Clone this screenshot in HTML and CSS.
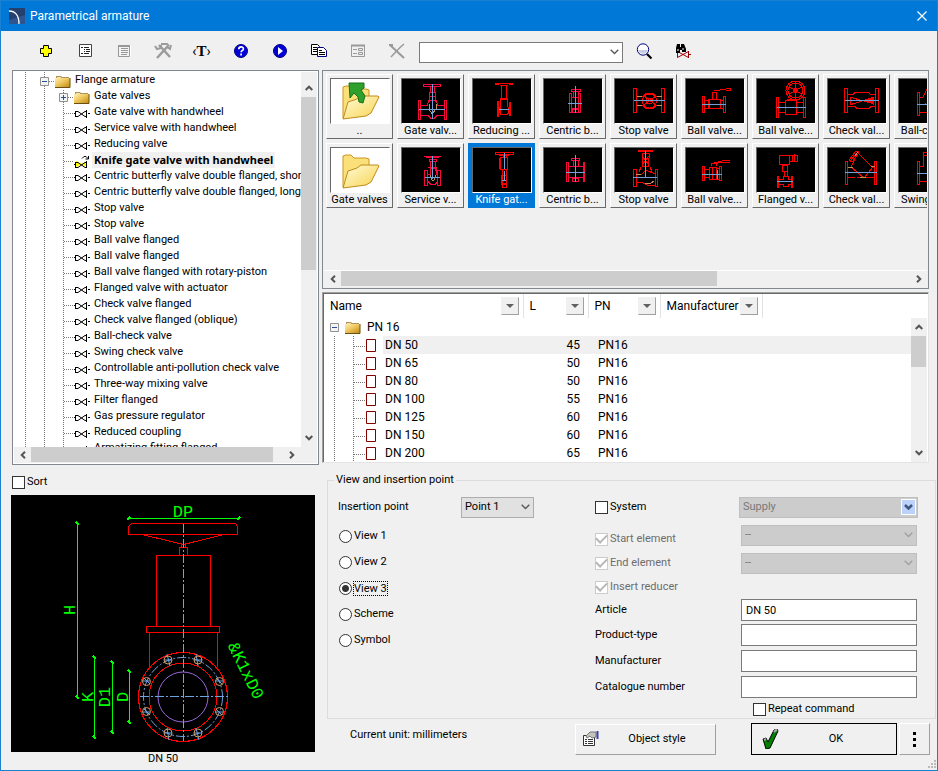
FILE: index.html
```
<!DOCTYPE html>
<html lang="en">
<head>
    <meta charset="UTF-8">
    <meta name="viewport" content="width=device-width, initial-scale=1.0">
    <title>Parametrical armature</title>
    <link rel="stylesheet" href="styles.css">
</head>
<body>
    <!-- Shared icons -->
    <svg class="icon-defs" aria-hidden="true">
        <defs>
            <linearGradient id="gold" x1="0" y1="0" x2="1" y2="1">
                <stop offset="0" stop-color="#fdf0b8"/>
                <stop offset="0.45" stop-color="#f0c860"/>
                <stop offset="1" stop-color="#c08a10"/>
            </linearGradient>
            <linearGradient id="paper" x1="0" y1="0" x2="1" y2="1">
                <stop offset="0" stop-color="#fffbd8"/>
                <stop offset="1" stop-color="#f8d450"/>
            </linearGradient>
            <symbol id="folder" viewBox="0 0 16 13">
                <path d="M1 3V1h5l1 1h7v2H1z" fill="#b0935a"/>
                <path d="M2 2h4v1H2z" fill="#f6e2a0"/>
                <path d="M0 3h15v9H0z" fill="url(#gold)"/>
                <path d="M15 3v9.500H0" fill="none" stroke="#6a5010"/>
            </symbol>
            <symbol id="valve" viewBox="0 0 16 9">
                <path d="M0 4.500h1M1.500 2v6M2 2.500h2M2 7.500h2M4 2.500l7 5M4 7.500l7-5M11 2.500h2M11 7.500h2M12.500 1v8M14 4.500h2" fill="none" stroke="#000"/>
            </symbol>
            <symbol id="valve-active" viewBox="0 0 16 13">
                <path d="M2 6l6 3-6 3zM13 6L7 9l6 3z" fill="#ff0"/>
                <path d="M0 9.500h1M1.500 7v6M2 7.500h2M2 12.500h2M4 7.500l7 5M4 12.500l7-5M11 7.500h2M11 12.500h2M12.500 6v7M8 3.500l2-2h2l2 2M14.500 1v3h-3" fill="none" stroke="#000"/>
            </symbol>
            <symbol id="doc" viewBox="0 0 10 13">
                <path d="M.5.5h9v12h-9z" fill="#fff" stroke="#800000"/>
            </symbol>
            <symbol id="up" viewBox="0 0 8 6"><path d="M0.700 5L4 1.700 7.300 5" fill="none" stroke="#555" stroke-width="2"/></symbol>
            <symbol id="down" viewBox="0 0 8 6"><path d="M0.700 1L4 4.300 7.300 1" fill="none" stroke="#555" stroke-width="2"/></symbol>
            <symbol id="left" viewBox="0 0 6 8"><path d="M5 .7L1.700 4 5 7.300" fill="none" stroke="#555" stroke-width="2"/></symbol>
            <symbol id="right" viewBox="0 0 6 8"><path d="M1 .7L4.300 4 1 7.300" fill="none" stroke="#555" stroke-width="2"/></symbol>
            <symbol id="chevron" viewBox="0 0 9 6"><path d="M.7.7l3.800 3.800L8.300.7" fill="none" stroke="currentColor" stroke-width="1.300"/></symbol>
            <symbol id="filter" viewBox="0 0 8 4"><path d="M0 0h8L4 4z" fill="#606060"/></symbol>
            <symbol id="minus" viewBox="0 0 9 9">
                <path d="M.5.5h8v8h-8z" fill="#f4f4f4" stroke="#919191"/><path d="M2 4.500h5" stroke="#2b4fa0"/>
            </symbol>
            <symbol id="plus" viewBox="0 0 9 9">
                <path d="M.5.5h8v8h-8z" fill="#f4f4f4" stroke="#919191"/><path d="M2 4.500h5M4.500 2v5" stroke="#2b4fa0"/>
            </symbol>
            <symbol id="open-folder" viewBox="0 0 58 44">
                <path d="M12 39V8l3-1h5l3 3h12l3 1v9L16 39z" fill="#fbe07a" stroke="#cf9420"/>
                <path d="M12 40l5-17 9-3 4-3h17l1 1-8 16-5 3z" fill="url(#paper)" stroke="#c08a18"/>
            </symbol>
        </defs>
    </svg>

    <header class="titlebar">
        <svg class="logo" width="16" height="16" viewBox="0 0 16 16">
            <path d="M0 0h16v16H0z" fill="#2f5590"/><path d="M0 0h16v7L0 12z" fill="#23406f"/>
            <path d="M0 3c6 0 10 4 10 13" fill="none" stroke="#fff" stroke-width="1.300"/>
        </svg>
        <h1>Parametrical armature</h1>
        <button class="close" aria-label="Close">
            <svg width="10" height="10" viewBox="0 0 10 10"><path d="M.5.5l9 9M9.500.5l-9 9" stroke="#fff" stroke-width="1.200"/></svg>
        </button>
    </header>

    <nav class="toolbar">
        <button aria-label="Add">
            <svg width="16" height="16" viewBox="0 0 16 16"><path d="M5.500 2.500h5v3h3v5h-3v3h-5v-3h-3v-5h3z" fill="#ff0" stroke="#000"/></svg>
        </button>
        <button aria-label="Properties">
            <svg width="16" height="16" viewBox="0 0 16 16"><path d="M2.500 1.500h12v12h-12z" fill="#fff" stroke="#444"/><path d="M4 4.500h2M7 4.500h5M7 6.500h1M9 6.500h4M7 8.500h1M9 8.500h4M4 10.500h2M7 10.500h5" stroke="#222"/></svg>
        </button>
        <button aria-label="List" disabled>
            <svg width="16" height="16" viewBox="0 0 16 16"><path d="M3.500 13.500h11v-11" fill="none" stroke="#fff"/><path d="M2.500 2.500h11v11h-11z" fill="#f3f3f3" stroke="#999"/><path d="M2 3h12" stroke="#999" stroke-width="2"/><path d="M5 5.500h7M5 7.500h7M5 9.500h7M5 11.500h6" stroke="#999"/></svg>
        </button>
        <button aria-label="Tools" disabled>
            <svg width="18" height="18" viewBox="0 0 18 18"><path d="M3 16L14 4M5 3l11 12" fill="none" stroke="#9b9b9b" stroke-width="2.500"/><path d="M7 2h6l2 2M1 4l2 3 4-1 0-3M13 5l3 2 1-4" fill="none" stroke="#9b9b9b" stroke-width="2"/></svg>
        </button>
        <button class="text-tool" aria-label="Text"><span>‹</span><b>T</b><span>›</span></button>
        <button aria-label="Help">
            <svg width="16" height="16" viewBox="0 0 16 16"><circle cx="8" cy="8" r="6.500" fill="#0000d8" stroke="#000080"/><path d="M5.800 6.200c0-3 4.600-3 4.600-.3 0 1.600-2.300 1.500-2.300 3.300M8.100 10.500v2" fill="none" stroke="#fff" stroke-width="1.700"/></svg>
        </button>
        <button aria-label="Run">
            <svg width="16" height="16" viewBox="0 0 16 16"><circle cx="8" cy="8" r="6.500" fill="#0000d8" stroke="#000080"/><path d="M6 4l5 4-5 4z" fill="#fff"/></svg>
        </button>
        <button aria-label="Copy">
            <svg width="16" height="16" viewBox="0 0 16 16"><path d="M.5 1.500h6l2 2v8h-8z" fill="#fff" stroke="#000"/><path d="M2 4.500h4M2 6.500h4M2 8.500h4" stroke="#000"/><path d="M6.500 4.500h6l3 3v6h-9z" fill="#fff" stroke="#000080"/><path d="M8 7.500h3M8 9.500h6M8 11.500h6" stroke="#000"/></svg>
        </button>
        <button aria-label="Form" disabled>
            <svg width="16" height="16" viewBox="0 0 16 16"><path d="M1.500 2.500h13v11h-13z" fill="none" stroke="#999"/><path d="M1 2.500h14" stroke="#999" stroke-width="2"/><path d="M3 6.500h4M3 10.500h4M8.500 5.500h4v2h-4zM8.500 9.500h4v2h-4z" fill="none" stroke="#999"/></svg>
        </button>
        <button aria-label="Delete" disabled>
            <svg width="16" height="16" viewBox="0 0 16 16"><path d="M1 2l14 13" stroke="#999" stroke-width="2"/><path d="M15 1C10 5 7 9 2 14" fill="none" stroke="#999" stroke-width="1.500"/><path d="M0 2h4" stroke="#999" stroke-width="2"/></svg>
        </button>
        <div class="combo search">
            <select aria-label="Search text"><option></option></select>
            <svg width="9" height="6"><use href="#chevron"/></svg>
        </div>
        <button aria-label="Search">
            <svg width="16" height="16" viewBox="0 0 16 16"><circle cx="7" cy="6.500" r="5.700" fill="#fff" stroke="#000080"/><path d="M2 7h10c-1 5-9 5-10 0z" fill="#c8cee4"/><path d="M11 11l4.500 4.500" stroke="#000" stroke-width="2.200"/></svg>
        </button>
        <button aria-label="Find armature">
            <svg width="16" height="16" viewBox="0 0 16 16"><path d="M2.500 8v6.500l11-6v6l-11-6M13.500 8v7M14 11.500h2" fill="none" stroke="#900"/><path d="M2 1h3v3h1V1h3l2 5v3H7V7H5v3H1V5z" fill="#000"/><path d="M3 6v2M8 5v2" stroke="#fff"/></svg>
        </button>
    </nav>

    <main class="content">
        <section class="left">
            <div class="tree-panel">
                <ul class="tree">
                    <li class="root"><svg class="toggle" width="9" height="9"><use href="#minus"/></svg><svg width="16" height="13"><use href="#folder"/></svg><span>Flange armature</span></li>
                    <li class="branch"><svg class="toggle" width="9" height="9"><use href="#plus"/></svg><svg width="16" height="13"><use href="#folder"/></svg><span>Gate valves</span></li>
                    <li><svg width="16" height="9"><use href="#valve"/></svg><span>Gate valve with handwheel</span></li>
                    <li><svg width="16" height="9"><use href="#valve"/></svg><span>Service valve with handwheel</span></li>
                    <li><svg width="16" height="9"><use href="#valve"/></svg><span>Reducing valve</span></li>
                    <li class="active"><svg width="16" height="13"><use href="#valve-active"/></svg><span>Knife gate valve with handwheel</span></li>
                    <li><svg width="16" height="9"><use href="#valve"/></svg><span>Centric butterfly valve double flanged, short</span></li>
                    <li><svg width="16" height="9"><use href="#valve"/></svg><span>Centric butterfly valve double flanged, long</span></li>
                    <li><svg width="16" height="9"><use href="#valve"/></svg><span>Stop valve</span></li>
                    <li><svg width="16" height="9"><use href="#valve"/></svg><span>Stop valve</span></li>
                    <li><svg width="16" height="9"><use href="#valve"/></svg><span>Ball valve flanged</span></li>
                    <li><svg width="16" height="9"><use href="#valve"/></svg><span>Ball valve flanged</span></li>
                    <li><svg width="16" height="9"><use href="#valve"/></svg><span>Ball valve flanged with rotary-piston</span></li>
                    <li><svg width="16" height="9"><use href="#valve"/></svg><span>Flanged valve with actuator</span></li>
                    <li><svg width="16" height="9"><use href="#valve"/></svg><span>Check valve flanged</span></li>
                    <li><svg width="16" height="9"><use href="#valve"/></svg><span>Check valve flanged (oblique)</span></li>
                    <li><svg width="16" height="9"><use href="#valve"/></svg><span>Ball-check valve</span></li>
                    <li><svg width="16" height="9"><use href="#valve"/></svg><span>Swing check valve</span></li>
                    <li><svg width="16" height="9"><use href="#valve"/></svg><span>Controllable anti-pollution check valve</span></li>
                    <li><svg width="16" height="9"><use href="#valve"/></svg><span>Three-way mixing valve</span></li>
                    <li><svg width="16" height="9"><use href="#valve"/></svg><span>Filter flanged</span></li>
                    <li><svg width="16" height="9"><use href="#valve"/></svg><span>Gas pressure regulator</span></li>
                    <li><svg width="16" height="9"><use href="#valve"/></svg><span>Reduced coupling</span></li>
                    <li><svg width="16" height="9"><use href="#valve"/></svg><span>Armatizing fitting flanged</span></li>
                </ul>
                <div class="vbar">
                    <button aria-label="Scroll up"><svg width="8" height="6"><use href="#up"/></svg></button>
                    <div class="track"><div class="thumb tree-thumb"></div></div>
                    <button aria-label="Scroll down"><svg width="8" height="6"><use href="#down"/></svg></button>
                </div>
                <div class="hbar">
                    <button aria-label="Scroll left"><svg width="6" height="8"><use href="#left"/></svg></button>
                    <div class="track"><div class="thumb tree-hthumb"></div></div>
                    <button aria-label="Scroll right"><svg width="6" height="8"><use href="#right"/></svg></button>
                </div>
            </div>

            <label class="check sort"><input type="checkbox">Sort</label>

            <figure class="preview">
                <svg viewBox="0 0 304 257">
                    <path d="M0 0h304v257H0z" fill="#000"/>
                    <g fill="none" stroke="#f00" shape-rendering="crispEdges">
                        <path d="M117.500 39.500V31.500l3-3H224.500l2 3V39.500zM145.500 60.500H199.500V131.500H145.500zM135.500 131.500H208.500V137.500H135.500zM138.500 138V172M206.500 138V172M168.500 52.500H176.500V60.500H168.500zM170.500 49V52M174.500 49V52"/>
                        <path d="M131 39.500L172.500 49.500 213 39.500"/>
                        <circle cx="172" cy="202" r="44.500"/>
                        <circle cx="172" cy="202" r="34"/>
                    </g>
                    <circle cx="172" cy="202" r="25" fill="none" stroke="#9a66d8"/>
                    <g fill="none" stroke="#6ea4e0">
                        <path d="M172.500 29V246M129 201.500H217" stroke-dasharray="9 2 2 2"/>
                        <circle cx="172" cy="202" r="39.500" stroke-dasharray="9 2 2 2"/>
                        <path d="M156 159l3 12M153 165h8M185 159l2 12M183 165h8M133 183l6 6M131 186h8M205 183l6 6M204 186h8M133 214l6 6M131 217h8M205 214l6 6M204 217h8M156 233l2 12M153 238h8M185 233l3 12M183 238h8"/>
                    </g>
                    <g fill="none" stroke="#d19a66">
                        <circle cx="157" cy="165" r="4"/><circle cx="187" cy="165" r="4"/>
                        <circle cx="135.500" cy="186.500" r="4"/><circle cx="208.500" cy="186.500" r="4"/>
                        <circle cx="135.500" cy="216.500" r="4"/><circle cx="208.500" cy="216.500" r="4"/>
                        <circle cx="157" cy="238" r="4"/><circle cx="187" cy="238" r="4"/>
                    </g>
                    <g stroke="#0f0" fill="none" shape-rendering="crispEdges">
                        <path d="M117 23.500H227M66.500 28V202M83.500 162V242M101.500 167V237M118.500 176V227"/>
                        <path d="M116 25l3-3M226 25l3-3M65 27l3 3M65 201l3 3M82 161l3 3M82 241l3 3M100 166l3 3M100 236l3 3M117 175l3 3M117 226l3 3" stroke-width="2"/>
                    </g>
                    <g class="cad-text">
                        <text x="172" y="22">DP</text>
                        <text transform="translate(64 115) rotate(-90)">H</text>
                        <text transform="translate(82 202) rotate(-90)">K</text>
                        <text transform="translate(99 202) rotate(-90)">D1</text>
                        <text transform="translate(117 202) rotate(-90)">D</text>
                        <text transform="translate(230 178) rotate(64)">&amp;K1xD0</text>
                    </g>
                </svg>
                <figcaption>DN 50</figcaption>
            </figure>
        </section>

        <section class="right">
            <div class="gallery">
                <div class="thumbs">
                    <button class="tile"><svg class="light" viewBox="0 0 58 44"><use href="#open-folder"/><path d="M18 4h15v5l-3 2 4 6-2 7-4-1-1-5-4-4-4 5z" fill="#2fa02c" stroke="#15701a"/></svg>..</button>
                    <button class="tile"><svg class="light" viewBox="0 0 58 44"><use href="#open-folder"/></svg>Gate valves</button>
                    <button class="tile"><svg viewBox="0 0 58 44">
                        <path class="p" d="M21.500 5.500h17v2h-17zM28.500 8v5M32.500 8v5M27.500 13.500h6v4h-6zM28 18l-1 5M33 18l1 5M16.500 21.500h2v19h-2zM42.500 21.500h2v19h-2zM19 26.500h6l2-5h7l2 5h6M19 36.500h7l3 3h3l3-3h7"/>
                        <path class="o" d="M27 25v5l3 5 4-5v-5"/><path class="b" d="M30.500 5v35M17 30.500h26"/></svg>Gate valv...</button>
                    <button class="tile"><svg viewBox="0 0 58 44">
                        <path class="p" d="M22 8.500h17M24 9.500h13M27.500 11.500h7v2h-7zM28.500 14v9M33.500 14v9M22.500 22.500h3v15h-3zM35.500 22.500h3v15h-3zM26 26.500h2v-6h6v6h2M26 33.500l3 3h4l3-3M26 19h9"/>
                        <path class="o" d="M28 27l2 5h2l2-5"/><path class="b" d="M30.500 8v23M23 29.500h15"/></svg>Service v...</button>
                    <button class="tile"><svg viewBox="0 0 58 44">
                        <path class="r" d="M22 4.500h18M22 5.500h4M36 5.500h4M27 6.500h8M28.500 7v12M33.500 7v12M24.500 22.500h1v15h-1zM27.500 20.500h7l1 14h-1v1h-7zM36.500 23.500h1v13h-1zM27 19.500h8M26 28v6M27 21v14"/>
                        <path class="b" d="M26 30.500h10"/></svg>Reducing ...</button>
                    <button class="tile selected"><svg viewBox="0 0 58 44">
                        <path class="r" d="M22.500 4.500h18v2h-18zM26 7h10M27.500 9.500h7v12h-7zM26.500 10v11M30 7v2M33 7v2M29.500 22v13h4v-13M28.500 27.500h5v9h-5zM29 37v2h4v-2"/>
                        <path class="b" d="M31.500 5v16M31.500 23v10M29 32.500h4"/></svg>Knife gat...</button>
                    <button class="tile"><svg viewBox="0 0 58 44">
                        <path class="p" d="M27.500 10.500h9v2h-9zM29.500 13v5M34.500 13v5M25.500 14.500h2v19h-2zM34.500 14.500h2v19h-2zM28 18.500h7M28 29.500h7M28.500 30.500h6v3h-6z"/>
                        <path class="b" d="M31.500 7v27M24 24.500h14"/></svg>Centric b...</button>
                    <button class="tile"><svg viewBox="0 0 58 44">
                        <path class="p" d="M27.500 10.500h8v2h-8zM29.500 13v5M34.500 13v5M22.500 14.500h2v19h-2zM39.500 14.500h1v19h-1zM25 18.500h14M25 29.500h14M28.500 30.500h6v3h-6z"/>
                        <path class="b" d="M31.500 7v27M22 24.500h19"/></svg>Centric b...</button>
                    <button class="tile"><svg viewBox="0 0 58 44">
                        <path class="r" d="M18.500 9.500h3v24h-3zM46.500 9.500h3v24h-3zM22 17.500h6l3-3h7l3 3h5M22 26.500h6l3 3h7l3-3h5M29 17l12 9M29 26l12-9"/>
                        <circle class="r" cx="34.500" cy="22" r="7"/><circle class="r" cx="34.500" cy="22" r="3"/>
                        <path class="o" d="M22 17h5M42 17h5M22 26h5M42 26h5"/><path class="b" d="M19 21.500h31"/></svg>Stop valve</button>
                    <button class="tile"><svg viewBox="0 0 58 44">
                        <path class="r" d="M23.500 2.500h14v1h-14zM27 5h7M27 5v5M34 5v5M27 8l7 9M34 8l-7 9M27.500 10.500h6v8h-6zM26 19l-2 5M35 19l2 5M18.500 21.500h3v17h-3zM40.500 21.500h2v17h-2zM22 26h5l4-4 9 4M22 34l6 1 4 2h8"/>
                        <path class="o" d="M21 26h5M30 36l6-1 3-2"/><path class="b" d="M30.500 3v27M18 29.500h24"/></svg>Stop valve</button>
                    <button class="tile"><svg viewBox="0 0 58 44">
                        <path class="r" d="M16.500 17.500h2v16h-2zM37.500 17.500h2v16h-2zM19 21.500h4v8h-4M34 21.500h4M34 29.500h4M22.500 20.500h12v9h-12zM26.500 20v-7h4v7M28 12l12-2 5-1M40 11h4v-1"/>
                        <path class="b" d="M16 25.500h24"/></svg>Ball valve...</button>
                    <button class="tile"><svg viewBox="0 0 58 44">
                        <path class="r" d="M16.500 18.500h2v14h-2zM33.500 18.500h2v14h-2zM19 21.500h4M19 29.500h4M23.500 19.500h7v12h-7zM25.500 18v-3h5v3M28 16l8-2h8M28 15l8-2 8-1M26 20v11M31 20h2v11h-2"/>
                        <path class="o" d="M31 22v9"/><path class="b" d="M16 26.500h20"/></svg>Ball valve...</button>
                    <button class="tile"><svg viewBox="0 0 58 44">
                        <circle class="r" cx="38.500" cy="11.500" r="9.500"/><circle class="r" cx="38.500" cy="11.500" r="7.500"/><circle class="r" cx="38.500" cy="11.500" r="2"/>
                        <path class="r" d="M32 8l13 7M32 15l13-7M38.500 3v17M30 20h10M19.500 18.500h2v20h-2zM46.500 18.500h2v20h-2zM22 23.500h6M22 33.500h6M28.500 21.500h11v14h-11zM40 23.500h6M40 33.500h6"/>
                        <path class="b" d="M20 28.500h29"/></svg>Ball valve...</button>
                    <button class="tile"><svg viewBox="0 0 58 44">
                        <path class="r" d="M22.500 7.500h10v9h-10zM33 7.500h7v6h-7M35 7v7M37 6v8M25.500 17.500h5v6h-5zM27 24v4M30 24v4M20.500 28.500h1v11h-1zM34.500 28.500h1v11h-1zM22 31h4v-3h5v3h4M22 36h4v2h5v-2h4"/>
                        <path class="b" d="M20 33.500h16"/></svg>Flanged v...</button>
                    <button class="tile"><svg viewBox="0 0 58 44">
                        <path class="r" d="M16.500 9.500h3v24h-3zM47.500 9.500h3v24h-3zM20 15.500h5l2-2h13l3 2h5M20 27.500h7l2 2h12l2-2h5M22.500 18v8M45.500 18v8M23 18.500l22 6M23 25.500l22-7"/>
                        <path d="M34 21.500l12-3v7z" fill="#f00"/><path class="b" d="M17 21.500h34"/></svg>Check val...</button>
                    <button class="tile"><svg viewBox="0 0 58 44">
                        <path class="r" d="M17.500 13.500h2v23h-2zM46.500 13.500h2v23h-2zM20 29h7M42 29h4M22 13l9-10"/>
                        <path class="r" d="M28 3l3 2L24 14l-3-2zM20 19h3l4-8M31 6l14 14M23 19l13 11 9-11M29 29h14"/>
                        <path class="o" d="M27 8l3-4M20 19h5M32 29h6M43 18h4"/><path class="b" d="M17 24.500h32"/></svg>Check val...</button>
                    <button class="tile"><svg viewBox="0 0 58 44">
                        <path class="r" d="M18.500 13.500h2v23h-2zM21 18h3L32 2l14 10v24M26 24v2M21 33h6l4 3"/>
                        <path class="b" d="M18 25.500h30"/></svg>Ball-chec...</button>
                    <button class="tile"><svg viewBox="0 0 58 44">
                        <path class="r" d="M18.500 13.500h2v23h-2zM21 18h3V4h22v14M24 7h20M21 33h6l4 3"/>
                        <path class="b" d="M18 25.500h30"/></svg>Swing ch...</button>
                </div>
                <div class="hbar">
                    <button aria-label="Scroll left"><svg width="6" height="8"><use href="#left"/></svg></button>
                    <div class="track"><div class="thumb gallery-thumb"></div></div>
                    <button aria-label="Scroll right"><svg width="6" height="8"><use href="#right"/></svg></button>
                </div>
            </div>

            <div class="sizes">
                <table>
                    <colgroup><col class="c-name"><col class="c-l"><col class="c-pn"><col class="c-man"><col></colgroup>
                    <thead>
                        <tr>
                            <th><div>Name<button aria-label="Filter name"><svg width="8" height="4"><use href="#filter"/></svg></button></div></th>
                            <th><div>L<button aria-label="Filter L"><svg width="8" height="4"><use href="#filter"/></svg></button></div></th>
                            <th><div>PN<button aria-label="Filter PN"><svg width="8" height="4"><use href="#filter"/></svg></button></div></th>
                            <th><div>Manufacturer<button aria-label="Filter manufacturer"><svg width="8" height="4"><use href="#filter"/></svg></button></div></th>
                            <td></td>
                        </tr>
                    </thead>
                    <tbody>
                        <tr class="group"><td colspan="5"><div><svg class="toggle" width="9" height="9"><use href="#minus"/></svg><svg width="16" height="13"><use href="#folder"/></svg>PN 16</div></td></tr>
                        <tr class="current"><td><div><svg width="10" height="13"><use href="#doc"/></svg><span>DN 50</span></div></td><td>45</td><td>PN16</td><td></td><td></td></tr>
                        <tr><td><div><svg width="10" height="13"><use href="#doc"/></svg><span>DN 65</span></div></td><td>50</td><td>PN16</td><td></td><td></td></tr>
                        <tr><td><div><svg width="10" height="13"><use href="#doc"/></svg><span>DN 80</span></div></td><td>50</td><td>PN16</td><td></td><td></td></tr>
                        <tr><td><div><svg width="10" height="13"><use href="#doc"/></svg><span>DN 100</span></div></td><td>55</td><td>PN16</td><td></td><td></td></tr>
                        <tr><td><div><svg width="10" height="13"><use href="#doc"/></svg><span>DN 125</span></div></td><td>60</td><td>PN16</td><td></td><td></td></tr>
                        <tr><td><div><svg width="10" height="13"><use href="#doc"/></svg><span>DN 150</span></div></td><td>60</td><td>PN16</td><td></td><td></td></tr>
                        <tr><td><div><svg width="10" height="13"><use href="#doc"/></svg><span>DN 200</span></div></td><td>65</td><td>PN16</td><td></td><td></td></tr>
                    </tbody>
                </table>
                <div class="vbar">
                    <button aria-label="Scroll up"><svg width="8" height="6"><use href="#up"/></svg></button>
                    <div class="track"><div class="thumb sizes-thumb"></div></div>
                    <button aria-label="Scroll down"><svg width="8" height="6"><use href="#down"/></svg></button>
                </div>
            </div>

            <fieldset class="options">
                <legend>View and insertion point</legend>
                <div class="views">
                    <div class="point">
                        <label for="point">Insertion point</label>
                        <div class="combo">
                            <select id="point"><option>Point 1</option></select>
                            <svg width="9" height="6"><use href="#chevron"/></svg>
                        </div>
                    </div>
                    <label class="check"><input type="radio" name="view"><span>View 1</span></label>
                    <label class="check"><input type="radio" name="view"><span>View 2</span></label>
                    <label class="check"><input type="radio" name="view" checked><span class="focus">View 3</span></label>
                    <label class="check"><input type="radio" name="view"><span>Scheme</span></label>
                    <label class="check"><input type="radio" name="view"><span>Symbol</span></label>
                </div>
                <div class="details">
                    <label class="check"><input type="checkbox">System</label>
                    <div class="combo wide">
                        <select aria-label="System type" disabled><option>Supply</option></select>
                        <svg class="blue-arrow" width="15" height="16" viewBox="0 0 15 16"><path d="M.5.5h14v15H.5z" fill="#bdd2fb" stroke="#fff"/><path d="M4 6l3.500 3.500L11 6" fill="none" stroke="#40557a" stroke-width="2.500"/></svg>
                    </div>
                    <label class="check off low"><input type="checkbox" checked disabled>Start element</label>
                    <div class="combo">
                        <select aria-label="Start element type" disabled><option>--</option></select>
                        <svg width="9" height="6"><use href="#chevron"/></svg>
                    </div>
                    <label class="check off"><input type="checkbox" checked disabled>End element</label>
                    <div class="combo">
                        <select aria-label="End element type" disabled><option>--</option></select>
                        <svg width="9" height="6"><use href="#chevron"/></svg>
                    </div>
                    <label class="check off both"><input type="checkbox" checked disabled>Insert reducer</label>
                    <label for="article">Article</label><input id="article" type="text" value="DN 50">
                    <label for="product">Product-type</label><input id="product" type="text">
                    <label for="manufacturer">Manufacturer</label><input id="manufacturer" type="text">
                    <label for="catalogue">Catalogue number</label><input id="catalogue" type="text">
                    <label class="check repeat"><input type="checkbox">Repeat command</label>
                </div>
            </fieldset>

            <footer class="actions">
                <span class="unit">Current unit: millimeters</span>
                <button class="style-btn">
                    <svg width="17" height="16" viewBox="0 0 17 16"><path d="M1.500 4.500h11v10h-11z" fill="#fff" stroke="#333"/><path d="M3 8.500h2M6 8.500h5M3 10.500h2M6 10.500h5M3 12.500h2M6 12.500h5" stroke="#333"/><path d="M4 5l4-4h6v5l-4 1-2-2-3 2z" fill="#c4c4bc" stroke="#777"/><path d="M15.500 0v8" stroke="#4040b0" stroke-width="2"/></svg>
                    <span>Object style</span>
                </button>
                <button class="ok-btn">
                    <svg width="17" height="20" viewBox="0 0 17 20"><path d="M1 10l3-1 2 4 6-12 3-1 1 2-8 17-4 1z" fill="#008000" stroke="#000"/><path d="M12 3l2-2 1 1M2 11l2-1" stroke="#aaa" fill="none" stroke-width="2"/></svg>
                    <span>OK</span>
                </button>
                <button class="more-btn" aria-label="More">
                    <svg width="3" height="15" viewBox="0 0 3 15"><path d="M0 0h3v3H0zM0 6h3v3H0zM0 12h3v3H0z"/></svg>
                </button>
            </footer>
        </section>
    </main>
    <svg class="grip" width="8" height="8" viewBox="0 0 8 8"><path d="M6 0h2v2H6zM3 3h2v2H3zM6 3h2v2H6zM0 6h2v2H0zM3 6h2v2H3zM6 6h2v2H6z" fill="#bbb"/></svg>
</body>
</html>
```
FILE: styles.css
```
* {
    box-sizing: border-box;
}
body {
    margin: 0;
    min-height: 100vh;
    border: 1px solid #1a80d2;
    background: #f0f0f0;
    color: #000;
    font-family: Roboto, Tahoma, sans-serif;
    font-size: 11px;
    line-height: 16px;
}
button, input, select {
    font: inherit;
    color: inherit;
    margin: 0;
}
button {
    padding: 0;
    border: none;
    background: none;
}
svg {
    display: block;
    flex: none;
}
.icon-defs {
    position: absolute;
    width: 0;
    height: 0;
}

/* title bar and toolbar */
.titlebar {
    display: flex;
    align-items: center;
    gap: 5px;
    height: 30px;
    padding: 0 10px 0 8px;
    background: #0078d7;
    color: #fff;
}
.titlebar h1 {
    flex: 1;
    margin: 0;
    font-size: 12px;
    font-weight: normal;
}
.toolbar {
    display: flex;
    align-items: center;
    height: 39px;
    padding: 1px 0 0 25px;
}
.toolbar > button {
    display: flex;
    justify-content: center;
    align-items: center;
    width: 39px;
    height: 28px;
}
.toolbar .text-tool {
    font-size: 14px;
}
.text-tool b {
    font-family: "Liberation Serif", serif;
    font-size: 15px;
}
.combo {
    display: grid;
    align-items: center;
    color: #000;
}
.combo select, .combo svg {
    grid-area: 1 / 1;
}
.combo svg {
    justify-self: end;
    margin-right: 4px;
    pointer-events: none;
    color: #555;
}
.combo select {
    appearance: none;
    width: 100%;
    height: 21px;
    padding: 0 3px;
    border: 1px solid #adadad;
    border-radius: 0;
    background: #e1e1e1;
}
.combo select:disabled {
    border-color: #bfbfbf;
    background: #ccc;
    color: #787878;
    opacity: 1;
}
.combo select:disabled + svg {
    color: #a0a0a0;
}
.search {
    width: 204px;
    margin: 2px 1px 0 3px;
}
.search select {
    border-color: #7a7a7a;
    background: #fff;
}

/* main layout */
.content {
    display: grid;
    grid-template-columns: 308px minmax(0, 1fr);
    gap: 3px;
    padding-left: 10px;
}

/* scroll bars */
.vbar, .hbar {
    display: flex;
    background: #f0f0f0;
}
.vbar {
    flex-direction: column;
    width: 16px;
}
.hbar {
    height: 16px;
}
.vbar button, .hbar button {
    display: grid;
    place-items: center;
    flex: none;
    width: 17px;
    height: 16px;
}
.vbar button {
    height: 18px;
    width: 15px;
}
.track {
    flex: 1;
}
.thumb {
    background: #cdcdcd;
}
.hbar .thumb {
    height: 15px;
}
.vbar .thumb {
    width: 15px;
}
.tree-thumb {
    height: 52%;
}
.tree-hthumb {
    width: 96%;
}
.gallery-thumb {
    width: 66%;
}
.sizes-thumb {
    height: 29%;
}

/* tree */
.tree-panel {
    display: grid;
    grid-template-columns: minmax(0, 1fr) 16px;
    grid-template-rows: 375px 16px;
    margin-left: 1px;
    padding: 1px;
    border: 1px solid #828790;
    background: #fff;
}
.tree-panel .vbar {
    padding-top: 7px;
}
.tree-panel .hbar {
    grid-column: 1 / 3;
    padding-right: 17px;
}
.tree {
    margin: 0;
    padding: 0;
    list-style: none;
    overflow: hidden;
    background:
        repeating-linear-gradient(#777 0 1px, transparent 1px 2px) 11px 0 / 1px 100% no-repeat,
        repeating-linear-gradient(#777 0 1px, transparent 1px 2px) 30px 0 / 1px 100% no-repeat,
        repeating-linear-gradient(#777 0 1px, transparent 1px 2px) 49px 18px / 1px 100% no-repeat;
}
.tree li {
    display: flex;
    align-items: center;
    height: 16px;
    padding-left: 60px;
    white-space: nowrap;
    background: repeating-linear-gradient(90deg, #777 0 1px, transparent 1px 2px) 50px 9px / 10px 1px no-repeat;
}
.tree li > svg {
    margin-top: 2px;
}
.tree li span {
    margin-left: 2px;
    padding: 0 2px;
}
.tree .root {
    padding-left: 26px;
    background-position: 35px 9px;
    background-size: 6px 1px;
}
.tree .branch {
    padding-left: 45px;
    background-position: 54px 9px;
    background-size: 6px 1px;
}
.tree .toggle {
    margin-right: 6px;
}
.tree .active {
    font-family: "Noto Sans", Tahoma, sans-serif;
    font-weight: bold;
}
.tree .active span {
    background: #f0f0f0;
}

/* check boxes and radios */
.check {
    display: flex;
    align-items: center;
    gap: 2px;
}
.check input {
    appearance: none;
    flex: none;
    width: 13px;
    height: 13px;
    border: 1px solid #333;
    background: #fff;
}
.check input[type="radio"] {
    border-radius: 50%;
}
.check input[type="radio"]:checked {
    background: radial-gradient(#333 0 3px, #fff 4px);
}
.check.off {
    color: #6d6d6d;
}
.check input:disabled {
    display: grid;
    place-items: center;
    border-color: #ccc;
}
.check input:disabled::before {
    content: "";
    width: 9px;
    height: 5px;
    margin-top: -3px;
    border: solid #b5b5b5;
    border-width: 0 0 2px 2px;
    transform: rotate(-45deg);
}
.focus {
    outline: 1px dotted #000;
    line-height: 13px;
}

.sort {
    margin: 9px 0 5px 1px;
}
.preview {
    margin: 0 4px 0 0;
    text-align: center;
}
.preview svg {
    width: 100%;
}
.preview figcaption {
    line-height: 14px;
}
.cad-text {
    fill: #0f0;
    font-family: "Liberation Mono", monospace;
    font-size: 17px;
    text-anchor: middle;
}

/* gallery */
.gallery {
    margin-right: 8px;
    border: 1px solid #828790;
    padding: 1px;
}
.thumbs {
    display: grid;
    grid-auto-flow: column;
    grid-auto-columns: 67px;
    grid-template-rows: 65px 65px;
    gap: 4px;
    height: 199px;
    padding: 2px;
    overflow: hidden;
    align-content: start;
    border-bottom: 1px solid #fff;
}
.tile {
    display: flex;
    flex-direction: column;
    align-items: center;
    padding-top: 3px;
    border: 1px solid;
    border-color: #fff #696969 #696969 #fff;
    white-space: nowrap;
    overflow: hidden;
}
.tile svg {
    width: 60px;
    height: 46px;
    margin-bottom: -1px;
    background: #000;
    border: 1px solid;
    border-color: #696969 #fff #fff #696969;
    shape-rendering: crispEdges;
}
.tile .light {
    background: #fff;
    shape-rendering: auto;
}
.tile.selected {
    background: #0078d7;
    border-color: #0078d7;
    color: #fff;
}
.p, .r, .b, .o {
    fill: none;
}
.p { stroke: #f80838; }
.r { stroke: #f00; }
.b { stroke: #74a0d8; }
.o { stroke: #c8905a; }

/* sizes table */
.sizes {
    display: flex;
    height: 171px;
    margin: 3px 8px 0 0;
    border: 1px solid;
    border-color: #a0a0a0 #e3e3e3 #e3e3e3 #a0a0a0;
    box-shadow: inset 1px 1px #696969;
    padding: 1px 1px 0 1px;
    background: #fff;
    overflow: hidden;
    font-size: 12px;
}
.sizes table {
    flex: 1;
    width: 0;
    table-layout: fixed;
    border-collapse: collapse;
}
.c-name { width: 199px; }
.c-l { width: 65px; }
.c-pn { width: 72px; }
.c-man { width: 102px; }
.sizes th, .sizes td {
    padding: 0;
    font-weight: normal;
    text-align: left;
}
.sizes th {
    height: 24px;
    border-right: 1px solid #e3e3e3;
}
.sizes th div {
    display: flex;
    justify-content: space-between;
    align-items: center;
    padding: 0 4px 0 6px;
}
.sizes th button {
    display: grid;
    place-items: center;
    width: 18px;
    height: 18px;
    border: 1px solid;
    border-color: #f0f0f0 #a0a0a0 #a0a0a0 #f0f0f0;
    background: #f0f0f0;
}
.sizes tbody td {
    height: 18px;
    line-height: 18px;
}
.sizes td div {
    display: flex;
    align-items: center;
    height: 18px;
    padding-left: 42px;
    background:
        repeating-linear-gradient(#777 0 1px, transparent 1px 2px) 10px 0 / 1px 100% no-repeat,
        repeating-linear-gradient(#777 0 1px, transparent 1px 2px) 29px 0 / 1px 100% no-repeat,
        repeating-linear-gradient(90deg, #777 0 1px, transparent 1px 2px) 30px 10px / 11px 1px no-repeat;
}
.sizes td span {
    flex: 1;
    margin-left: 7px;
    padding-left: 2px;
}
.sizes .group td div {
    gap: 6px;
    padding-left: 6px;
    background: none;
}
.sizes .current span, .sizes .current td + td {
    background: #f0f0f0;
}
.sizes tbody td:nth-child(2) {
    padding-right: 8px;
    text-align: right;
}
.sizes tbody td:nth-child(3) {
    padding-left: 10px;
}
.sizes .vbar {
    margin-top: 24px;
}

/* options */
.options {
    display: grid;
    grid-template-columns: 257px minmax(0, 1fr);
    margin: 9px 1px 0 5px;
    padding: 6px 18px 0 10px;
    border: 1px solid #dcdcdc;
}
.options legend {
    margin-left: -4px;
    padding: 0 2px;
}
.views {
    display: grid;
    grid-template-rows: 29px;
    grid-auto-rows: 26px;
    align-content: start;
    align-items: center;
}
.views .check {
    margin-left: 1px;
}
.point {
    display: flex;
    justify-content: space-between;
    align-items: center;
    align-self: start;
    height: 26px;
    padding-right: 61px;
}
.point .combo {
    width: 73px;
}
.details {
    display: grid;
    grid-template-columns: 146px minmax(0, 1fr);
    grid-template-rows: 26px 30px 26px 22px 24px 26px 26px 26px 18px;
    align-items: center;
}
.details .low {
    align-self: end;
    height: 22px;
}
.details .both {
    grid-column: 1 / 3;
}
.details .wide {
    margin: 0 -1px 0 -2px;
}
.combo .blue-arrow {
    margin-right: 2px;
}
.details > input {
    height: 22px;
    padding: 0 4px;
    border: 1px solid #7a7a7a;
    background: #fff;
}
.details .repeat {
    grid-column: 2;
    margin-left: 12px;
}

/* bottom buttons */
.actions {
    display: flex;
    align-items: center;
    margin-top: 4px;
    padding: 0 7px 0 28px;
}
.unit {
    flex: 1;
    padding-bottom: 9px;
}
.actions button {
    display: flex;
    align-items: center;
    height: 32px;
    border: 1px solid;
    border-color: #fff #a0a0a0 #a0a0a0 #fff;
}
.actions button span {
    flex: 1;
    text-align: center;
}
.actions .style-btn {
    width: 141px;
    height: 31px;
    margin-right: 35px;
    padding-left: 6px;
}
.actions .ok-btn {
    width: 146px;
    margin-right: 2px;
    padding: 0 3px 0 10px;
    border-color: #000;
}
.actions .more-btn {
    width: 31px;
    justify-content: center;
}
.grip {
    position: absolute;
    right: 2px;
    bottom: 3px;
}
```
